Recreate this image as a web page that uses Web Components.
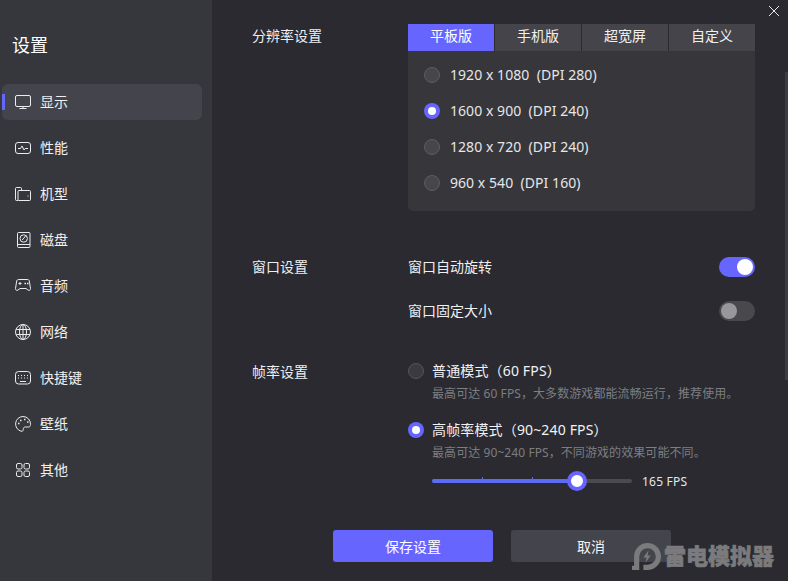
<!DOCTYPE html>
<html lang="zh-CN">
<head>
<meta charset="utf-8">
<title>设置</title>
<style>
  html, body { margin: 0; height: 100%; background: #2a2a30; overflow: hidden; }
  body { font: 14px "Noto Sans", "Noto Sans CJK SC", sans-serif; color: #f2f2f4; }
</style>
</head>
<body>
<settings-app>
  <side-nav slot="nav">
    <nav-item icon="monitor" active>显示</nav-item>
    <nav-item icon="pulse">性能</nav-item>
    <nav-item icon="model">机型</nav-item>
    <nav-item icon="disk">磁盘</nav-item>
    <nav-item icon="pad">音频</nav-item>
    <nav-item icon="globe">网络</nav-item>
    <nav-item icon="keys">快捷键</nav-item>
    <nav-item icon="palette">壁纸</nav-item>
    <nav-item icon="grid">其他</nav-item>
  </side-nav>

  <setting-row label="分辨率设置" style="height:187px">
    <res-panel>
      <res-option>1920 x 1080  (DPI 280)</res-option>
      <res-option checked>1600 x 900  (DPI 240)</res-option>
      <res-option>1280 x 720  (DPI 240)</res-option>
      <res-option>960 x 540  (DPI 160)</res-option>
    </res-panel>
  </setting-row>

  <setting-row label="窗口设置" style="margin-top:34px;height:88px;--label-height:44px">
    <switch-line on>窗口自动旋转</switch-line>
    <switch-line>窗口固定大小</switch-line>
  </setting-row>

  <setting-row label="帧率设置" style="margin-top:26px;--label-height:26px">
    <fps-mode title-text="普通模式（60 FPS）" desc="最高可达 60 FPS，大多数游戏都能流畅运行，推荐使用。"></fps-mode>
    <fps-mode checked title-text="高帧率模式（90~240 FPS）" desc="最高可达 90~240 FPS，不同游戏的效果可能不同。">
      <fps-slider></fps-slider>
    </fps-mode>
  </setting-row>

  <action-bar slot="actions">
    <action-button primary>保存设置</action-button>
    <action-button>取消</action-button>
  </action-bar>

  <brand-mark slot="overlay">雷电模拟器</brand-mark>
</settings-app>

<script>
  const ICONS = {
    monitor: '<rect x=".5" y="1.5" width="15" height="11" rx="1.5"/><path d="M8 12.5v2M4.5 14.5h7"/>',
    pulse: '<rect x=".5" y="2.5" width="15" height="11" rx="2.5"/><path d="M3 8.5h2.5l1.5-2.5 2 4 1.2-1.5H13"/>',
    model: '<path d="M3 14.5H1.5a1 1 0 0 1-1-1v-11a1 1 0 0 1 1-1h4a1 1 0 0 1 1 1V4"/><rect x="3" y="4.5" width="12.5" height="10" rx="1"/><path d="M13 9.500v1"/>',
    disk: '<rect x="2.500" y=".5" width="12.500" height="15" rx="1"/><path d="M2.500 12.500h12.500"/><circle cx="8.700" cy="6.500" r="3.700"/><path d="M7.200 8 10.800 3.800"/>',
    pad: '<path d="M3.500 1.500h9c1 0 1.600.6 1.800 1.500l1.200 7.500c.2 1.500-1.300 2.500-2.500 1.500L11 10.500H5L3 12c-1.200 1-2.700 0-2.500-1.500L1.700 3c.2-.9.8-1.500 1.800-1.500z"/><path d="M3.500 5.500h3M5 4v3"/><path d="M9.500 5.500h1.500M12 5.500h1.500" stroke-width="1.500"/>',
    globe: '<circle cx="8" cy="8" r="7.500"/><ellipse cx="8" cy="8" rx="3.500" ry="7.500"/><path d="M8 .5v15M1.200 5.500h13.600M1.200 10.500h13.600"/>',
    keys: '<rect x=".5" y="1.500" width="15" height="12.500" rx="3"/><path d="M3 5.500h1M6 5.500h1M9 5.500h1M12 5.500h1M3 8h1M6 8h1M9 8h1M12 8h1M5 11.500h6"/>',
    palette: '<path d="M8 .5a7.500 7.500 0 0 0-2 14.700c1.500.4 2.400-.5 2.300-1.700-.1-1.300.3-2.500 2-2.500h3.200c1.300 0 2-1 2-2.500A7.500 7.500 0 0 0 8 .5z"/><path d="M3 7.500h1.500M5 4.500h1.500M9 3.500h1.500M12 6h1.500" stroke-width="1.500"/>',
    grid: '<rect x="1.500" y="1.500" width="5.500" height="5.500" rx="1.500"/><rect x="9" y="1.500" width="5.500" height="5.500" rx="1.500"/><rect x="1.500" y="9" width="5.500" height="5.500" rx="1.500"/><rect x="9" y="9" width="5.500" height="5.500" rx="1.500"/>'
  };

  class SettingsApp extends HTMLElement {
    constructor() {
      super();
      this.attachShadow({ mode: 'open' });
      this.shadowRoot.innerHTML = `
        <style>
          :host { display: flex; width: 788px; height: 581px; position: relative; overflow: hidden; background: #2a2a30; }
          .main { flex: 1; padding: 24px 0 0 40px; display: flex; flex-direction: column; }
          .close { position: absolute; left: 769px; top: 6px; width: 10px; height: 10px; }
          .bar { position: absolute; right: 0; top: 72px; width: 3px; height: 308px; background: #3c3c42; }
        </style>
        <slot name="nav"></slot>
        <div class="main">
          <slot></slot>
          <slot name="actions"></slot>
        </div>
        <svg class="close" viewBox="0 0 10 10" fill="none" stroke="#e8e8ea"><path d="M0 0l10 10M10 0L0 10"/></svg>
        <div class="bar"></div>
        <slot name="overlay"></slot>
      `;
    }
  }
  customElements.define('settings-app', SettingsApp);

  class SideNav extends HTMLElement {
    constructor() {
      super();
      this.attachShadow({ mode: 'open' });
      this.shadowRoot.innerHTML = `
        <style>
          :host { display: block; width: 212px; flex: none; background: #36373c; box-sizing: border-box; }
          h1 { margin: 0; padding: 32px 0 0 12px; height: 84px; box-sizing: border-box; font-size: 18px; line-height: 26px; font-weight: 400; color: #fff; }
          .list { display: flex; flex-direction: column; gap: 10px; padding-left: 2px; }
        </style>
        <h1>设置</h1>
        <div class="list"><slot></slot></div>
      `;
    }
  }
  customElements.define('side-nav', SideNav);

  class NavItem extends HTMLElement {
    constructor() {
      super();
      this.attachShadow({ mode: 'open' });
    }
    connectedCallback() {
      this.shadowRoot.innerHTML = `
        <style>
          :host { display: flex; align-items: center; width: 200px; height: 36px; padding-left: 13px; gap: 9px; box-sizing: border-box; position: relative; border-radius: 6px; color: #f0f0f2; }
          :host([active]) { background: #44454c; }
          :host([active])::before { content: ""; position: absolute; left: 0; top: 10px; width: 3px; height: 16px; background: #6666ff; }
          svg { width: 16px; height: 16px; fill: none; stroke: #ececee; stroke-width: 1; flex: none; }
          span { margin-top: -2px; }
        </style>
        <svg viewBox="0 0 16 16">${ICONS[this.getAttribute('icon')]}</svg>
        <span><slot></slot></span>
      `;
    }
  }
  customElements.define('nav-item', NavItem);

  class SettingRow extends HTMLElement {
    constructor() {
      super();
      this.attachShadow({ mode: 'open' });
    }
    connectedCallback() {
      this.shadowRoot.innerHTML = `
        <style>
          :host { display: grid; grid-template-columns: 156px 347px; align-content: start; }
          .label { line-height: var(--label-height, 24px); color: #eeeef0; }
          .body { display: flex; flex-direction: column; }
        </style>
        <div class="label">${this.getAttribute('label')}</div>
        <div class="body"><slot></slot></div>
      `;
    }
  }
  customElements.define('setting-row', SettingRow);

  class ResPanel extends HTMLElement {
    constructor() {
      super();
      this.attachShadow({ mode: 'open' });
      this.shadowRoot.innerHTML = `
        <style>
          :host { display: block; background: #36363b; border-radius: 0 0 5px 5px; }
          .tabs { display: flex; gap: 1px; background: #2a2a30; }
          .tabs div { flex: 1; height: 27px; line-height: 24px; text-align: center; background: #44444a; color: #f0f0f2; }
          .tabs .on { background: #6666ff; color: #fff; }
          .opts { padding: 6px 0 10px 16px; display: flex; flex-direction: column; }
        </style>
        <div class="tabs"><div class="on">平板版</div><div>手机版</div><div>超宽屏</div><div>自定义</div></div>
        <div class="opts"><slot></slot></div>
      `;
    }
  }
  customElements.define('res-panel', ResPanel);

  class RadioDot extends HTMLElement {
    constructor() {
      super();
      this.attachShadow({ mode: 'open' });
      this.shadowRoot.innerHTML = `
        <style>
          :host { display: block; width: 16px; height: 16px; flex: none; box-sizing: border-box; border-radius: 50%; border: 1px solid #5e5e62; background: #46464b; position: relative; }
          :host([checked]) { border: 0; background: #6666ff; }
          :host([checked])::after { content: ""; position: absolute; left: 4px; top: 4px; width: 8px; height: 8px; border-radius: 50%; background: #fff; }
        </style>
      `;
    }
  }
  customElements.define('radio-dot', RadioDot);

  class ResOption extends HTMLElement {
    constructor() {
      super();
      this.attachShadow({ mode: 'open' });
    }
    connectedCallback() {
      this.shadowRoot.innerHTML = `
        <style>
          :host { display: flex; align-items: center; gap: 10px; height: 36px; color: #e6e6e8; }
          span { white-space: pre; letter-spacing: .05px; margin-top: -1px; }
        </style>
        <radio-dot ${this.hasAttribute('checked') ? 'checked' : ''}></radio-dot>
        <span><slot></slot></span>
      `;
    }
  }
  customElements.define('res-option', ResOption);

  class SwitchLine extends HTMLElement {
    constructor() {
      super();
      this.attachShadow({ mode: 'open' });
      this.shadowRoot.innerHTML = `
        <style>
          :host { display: flex; align-items: center; justify-content: space-between; height: 44px; color: #f0f0f2; }
          span { margin-top: -2px; }
          .track { width: 36px; height: 20px; border-radius: 10px; background: #48484d; box-sizing: border-box; padding: 2px; display: flex; }
          .knob { width: 16px; height: 16px; border-radius: 50%; background: #98989c; }
          :host([on]) .track { background: #6666ff; justify-content: flex-end; }
          :host([on]) .knob { background: #fff; }
        </style>
        <span><slot></slot></span>
        <div class="track"><div class="knob"></div></div>
      `;
    }
  }
  customElements.define('switch-line', SwitchLine);

  class FpsMode extends HTMLElement {
    constructor() {
      super();
      this.attachShadow({ mode: 'open' });
    }
    connectedCallback() {
      this.shadowRoot.innerHTML = `
        <style>
          :host { display: grid; grid-template-columns: 16px 1fr; column-gap: 8px; margin-bottom: 14px; }
          radio-dot { margin-top: 4px; }
          radio-dot:not([checked]) { background: #3a3a3f; border-color: #56565a; }
          .title { line-height: 24px; color: #f2f2f4; letter-spacing: .15px; }
          .desc { grid-column: 2; font-size: 12px; line-height: 20px; color: #7e7e82; margin-top: 1px; letter-spacing: .08px; }
          .extra { grid-column: 2; }
        </style>
        <radio-dot ${this.hasAttribute('checked') ? 'checked' : ''}></radio-dot>
        <div class="title">${this.getAttribute('title-text')}</div>
        <div class="desc">${this.getAttribute('desc')}</div>
        <div class="extra"><slot></slot></div>
      `;
    }
  }
  customElements.define('fps-mode', FpsMode);

  class FpsSlider extends HTMLElement {
    constructor() {
      super();
      this.attachShadow({ mode: 'open' });
      this.shadowRoot.innerHTML = `
        <style>
          :host { display: flex; align-items: center; gap: 10px; height: 20px; margin-top: 8px; font-size: 12px; color: #e6e6e8; letter-spacing: .2px; }
          .track { width: 200px; height: 4px; border-radius: 2px; background: #4a4a4f; position: relative; }
          .fill { width: 145px; height: 4px; border-radius: 2px; background: #5a6cf5; }
          .tick { position: absolute; top: -2px; width: 1px; height: 2px; background: #5a6cf5; }
          .thumb { position: absolute; left: 135px; top: -8px; width: 12px; height: 12px; border: 4px solid #6666ff; border-radius: 50%; background: #fff; }
        </style>
        <div class="track">
          <div class="fill"></div>
          <i class="tick" style="left:50px"></i>
          <i class="tick" style="left:100px"></i>
          <div class="thumb"></div>
        </div>
        <span>165 FPS</span>
      `;
    }
  }
  customElements.define('fps-slider', FpsSlider);

  class ActionBar extends HTMLElement {
    constructor() {
      super();
      this.attachShadow({ mode: 'open' });
      this.shadowRoot.innerHTML = `
        <style>
          :host { display: flex; gap: 18px; margin: 25px 0 0 81px; }
        </style>
        <slot></slot>
      `;
    }
  }
  customElements.define('action-bar', ActionBar);

  class ActionButton extends HTMLElement {
    constructor() {
      super();
      this.attachShadow({ mode: 'open' });
      this.shadowRoot.innerHTML = `
        <style>
          :host { display: flex; align-items: center; justify-content: center; width: 160px; height: 32px; border-radius: 3px; background: #44444c; color: #f4f4f6; }
          :host([primary]) { background: #6666ff; color: #fff; }
          span { margin-top: -1px; }
        </style>
        <span><slot></slot></span>
      `;
    }
  }
  customElements.define('action-button', ActionButton);

  class BrandMark extends HTMLElement {
    constructor() {
      super();
      this.attachShadow({ mode: 'open' });
      this.shadowRoot.innerHTML = `
        <style>
          :host { position: absolute; left: 632px; top: 541px; display: flex; align-items: center; gap: 3px; height: 30px; font-size: 22px; font-weight: 900; line-height: 30px; color: #7b7b7e; white-space: nowrap; -webkit-text-stroke: .6px #7b7b7e; }
          svg { width: 29px; height: 29px; }
          span { margin-top: -2px; }
        </style>
        <svg viewBox="0 0 28 28">
          <path fill="#7b7b7e" fill-rule="evenodd" d="M15 1a13 13 0 0 1 0 26h-4v-5h4a8 8 0 0 0 0-16 8 8 0 0 0-8 8v13H0v-4h2v-9A13 13 0 0 1 15 1z"/>
          <path fill="#7b7b7e" d="M16 8l-5 7h3l-1 5 5-7h-3z"/>
        </svg>
        <span><slot></slot></span>
      `;
    }
  }
  customElements.define('brand-mark', BrandMark);
</script>
</body>
</html>
